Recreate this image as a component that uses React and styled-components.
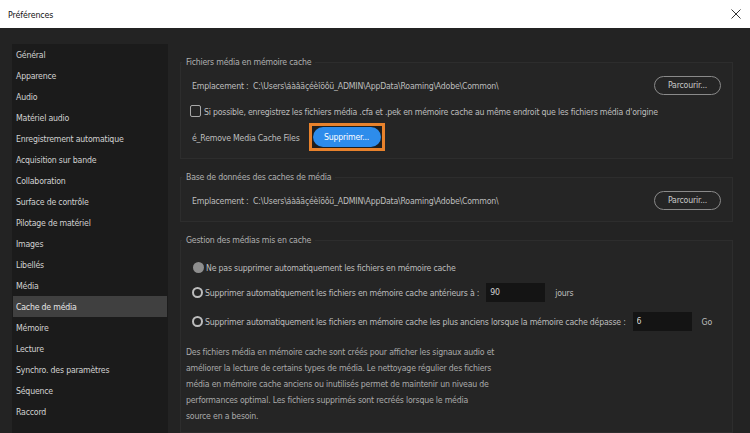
import React, {useState} from 'react'
import styled, {createGlobalStyle, css} from 'styled-components'

const GlobalStyle = createGlobalStyle`
  html, body {
    margin: 0;
    padding: 0;
    background: #232323;
    width: 750px;
    height: 433px;
    overflow: hidden;
  }
  * {
    box-sizing: border-box;
  }
  body {
    font-family: "DejaVu Sans Condensed", "DejaVu Sans", sans-serif;
    font-stretch: condensed;
    font-size: 8.7px;
    letter-spacing: -0.2px;
  }
`

const Window = styled.div`
  width: 750px;
  height: 433px;
  display: flex;
  flex-direction: column;
  background: #232323;
`

const TitleBar = styled.div`
  height: 28px;
  flex: none;
  background: #ffffff;
  display: flex;
  align-items: center;
  justify-content: space-between;
  padding: 2px 8px 0 8px;
  color: #111;
  font-size: 8.8px;
  letter-spacing: -0.1px;
`

const CloseButton = styled.div`
  width: 12px;
  height: 12px;
  display: flex;
  align-items: center;
  justify-content: center;
  margin-top: -2px;
`

const Body = styled.div`
  flex: 1;
  display: flex;
  padding: 16px 17px 0 12px;
  gap: 12px;
  overflow: hidden;
`

const Sidebar = styled.ul`
  list-style: none;
  margin: 0;
  padding: 0;
  width: 156px;
  flex: none;
  background: #1b1b1b;
`

const SideItem = styled.li`
  height: 21px;
  line-height: 20px;
  padding: 1px 0 0 4px;
  color: #d2d2d2;
  white-space: nowrap;
  cursor: default;
  ${(props) =>
    props.active &&
    css`
      background: #404040;
      color: #e6e6e6;
      margin: 0 1px;
      padding-left: 3px;
    `}
`

const Content = styled.div`
  flex: 1;
  min-width: 0;
  display: flex;
  flex-direction: column;
  padding-top: 11px;
  gap: 11px;
`

const Group = styled.fieldset`
  margin: 0;
  padding: 0 12px ${(props) => props.bottom || 0}px 11px;
  border: 1px solid #2d2d2d;
  background: #252525;
  min-width: 0;
  ${(props) =>
    props.grow &&
    css`
      flex: 1;
    `}
`

const Legend = styled.legend`
  margin-left: -10px;
  padding: 1px 4px 0;
  height: 14px;
  line-height: 13px;
  color: #b0b0b0;
`

const Row = styled.div`
  display: flex;
  align-items: center;
  height: ${(props) => props.h || 20}px;
  margin-top: ${(props) => props.top || 0}px;
  padding-top: 1px;
  color: #bebebe;
  white-space: nowrap;
`

const Label = styled.span`
  color: #bebebe;
`

const Spacer = styled.div`
  flex: 1;
`

const OutlineButton = styled.button`
  width: 67px;
  height: 19px;
  border: 1.5px solid #8a8a8a;
  border-radius: 10px;
  background: transparent;
  color: #c8c8c8;
  font-family: inherit;
  font-size: inherit;
  letter-spacing: inherit;
  padding: 0;
  margin: -1px -1px 0 0;
`

const Highlight = styled.span`
  display: inline-flex;
  border: 3px solid #e8822c;
  padding: 1px;
  margin: -1px 0 0 9px;
  background: #1e1e1e;
`

const PrimaryButton = styled.button`
  width: 68px;
  height: 20px;
  border: none;
  border-radius: 10px;
  background: #2d8ceb;
  color: #ffffff;
  font-family: inherit;
  font-size: inherit;
  letter-spacing: inherit;
  padding: 0;
`

const CheckBox = styled.span`
  width: 11px;
  height: 12px;
  border: 1.5px solid #a8a8a8;
  border-radius: 2px;
  margin: -1px 3px 0 -2px;
  flex: none;
`

const Radio = styled.span`
  width: 11px;
  height: 11px;
  border-radius: 50%;
  flex: none;
  margin: -1px 2px 0 0;
  ${(props) =>
    props.checked
      ? css`
          background: #8e8e8e;
          margin-left: 1px;
        `
      : css`
          border: 2px solid #bdbdbd;
        `}
`

const NumberBox = styled.input`
  width: 59px;
  height: 19px;
  margin: -1px 10px 0 7px;
  border: none;
  outline: none;
  background: #141414;
  color: #d4d4d4;
  font-family: inherit;
  font-size: inherit;
  letter-spacing: inherit;
  padding: 0 4px;
`

const Note = styled.p`
  margin: 12px 0 0 -6px;
  padding-top: 1px;
  color: #aaaaaa;
  line-height: 16px;
`

const sections = [
  'Général',
  'Apparence',
  'Audio',
  'Matériel audio',
  'Enregistrement automatique',
  'Acquisition sur bande',
  'Collaboration',
  'Surface de contrôle',
  'Pilotage de matériel',
  'Images',
  'Libellés',
  'Média',
  'Cache de média',
  'Mémoire',
  'Lecture',
  'Synchro. des paramètres',
  'Séquence',
  'Raccord',
]

const cachePath = 'C:\\Users\\áàâäçéèîöôü_ADMIN\\AppData\\Roaming\\Adobe\\Common\\'

const App = () => {
  const [active, setActive] = useState('Cache de média')
  const [mode, setMode] = useState(0)
  const [days, setDays] = useState('90')
  const [size, setSize] = useState('6')

  return (
    <Window>
      <GlobalStyle />
      <TitleBar>
        <span>Préférences</span>
        <CloseButton>
          <svg width="10" height="10" viewBox="0 0 10 10">
            <path d="M0.5 0.5 L9.5 9.5 M9.5 0.5 L0.5 9.5" stroke="#333" strokeWidth="1" fill="none" />
          </svg>
        </CloseButton>
      </TitleBar>
      <Body>
        <Sidebar>
          {sections.map((s) => (
            <SideItem key={s} active={s === active} onClick={() => setActive(s)}>
              {s}
            </SideItem>
          ))}
        </Sidebar>
        <Content>
          <Group bottom={7}>
            <Legend>Fichiers média en mémoire cache</Legend>
            <Row top={6}>
              <Label>Emplacement :&nbsp;&nbsp;{cachePath}</Label>
              <Spacer />
              <OutlineButton>Parcourir...</OutlineButton>
            </Row>
            <Row top={6}>
              <CheckBox />
              <Label>
                Si possible, enregistrez les fichiers média .cfa et .pek en mémoire cache au même endroit que les fichiers média d'origine
              </Label>
            </Row>
            <Row top={2} h={28}>
              <Label>é_Remove Media Cache Files</Label>
              <Highlight>
                <PrimaryButton>Supprimer...</PrimaryButton>
              </Highlight>
            </Row>
          </Group>
          <Group bottom={11}>
            <Legend>Base de données des caches de média</Legend>
            <Row top={6}>
              <Label>Emplacement :&nbsp;&nbsp;{cachePath}</Label>
              <Spacer />
              <OutlineButton>Parcourir...</OutlineButton>
            </Row>
          </Group>
          <Group grow>
            <Legend>Gestion des médias mis en cache</Legend>
            <Row top={10} onClick={() => setMode(0)}>
              <Radio checked={mode === 0} />
              <Label>Ne pas supprimer automatiquement les fichiers en mémoire cache</Label>
            </Row>
            <Row top={5} onClick={() => setMode(1)}>
              <Radio checked={mode === 1} />
              <Label>Supprimer automatiquement les fichiers en mémoire cache antérieurs à :</Label>
              <NumberBox value={days} onChange={(e) => setDays(e.target.value)} />
              <Label>jours</Label>
            </Row>
            <Row top={9} onClick={() => setMode(2)}>
              <Radio checked={mode === 2} />
              <Label>
                Supprimer automatiquement les fichiers en mémoire cache les plus anciens lorsque la mémoire cache dépasse :
              </Label>
              <NumberBox value={size} onChange={(e) => setSize(e.target.value)} />
              <Label>Go</Label>
            </Row>
            <Note>
              Des fichiers média en mémoire cache sont créés pour afficher les signaux audio et
              <br />
              améliorer la lecture de certains types de média. Le nettoyage régulier des fichiers
              <br />
              média en mémoire cache anciens ou inutilisés permet de maintenir un niveau de
              <br />
              performances optimal. Les fichiers supprimés sont recréés lorsque le média
              <br />
              source en a besoin.
            </Note>
          </Group>
        </Content>
      </Body>
    </Window>
  )
}

export default App
